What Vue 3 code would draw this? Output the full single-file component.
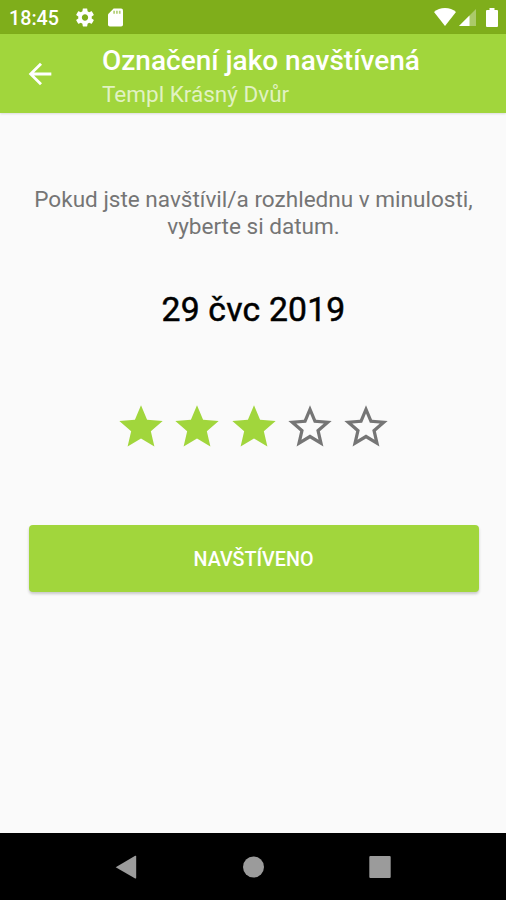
<script setup>
import { ref } from 'vue'

const rating = ref(3)
const starFull = 'M12 17.27L18.18 21l-1.64-7.03L22 9.24l-7.19-.61L12 2 9.19 8.63 2 9.24l5.46 4.73L5.82 21z'
const starEmpty = 'M22 9.24l-7.19-.62L12 2 9.19 8.63 2 9.24l5.46 4.73L5.82 21 12 17.27 18.18 21l-1.63-7.03L22 9.24zM12 15.5l-3.93 2.37 1.04-4.47-3.47-3.01 4.58-.4L12 5.8l1.78 4.2 4.58.4-3.47 3 1.04 4.47L12 15.5z'
</script>

<template>
  <div class="screen">
    <div class="status">
      <span class="clock">18:45</span>
      <svg class="gear" viewBox="2 2 20 20"><path fill="#fff" d="M19.43 12.98c.04-.32.07-.64.07-.98s-.03-.66-.07-.98l2.11-1.65c.19-.15.24-.42.12-.64l-2-3.46c-.12-.22-.39-.3-.61-.22l-2.49 1c-.52-.4-1.08-.73-1.69-.98l-.38-2.65C14.46 2.18 14.25 2 14 2h-4c-.25 0-.46.18-.49.42l-.38 2.65c-.61.25-1.17.59-1.69.98l-2.49-1c-.23-.09-.49 0-.61.22l-2 3.46c-.13.22-.07.49.12.64l2.11 1.65c-.04.32-.07.65-.07.98s.03.66.07.98l-2.11 1.65c-.19.15-.24.42-.12.64l2 3.46c.12.22.39.3.61.22l2.49-1c.52.4 1.08.73 1.69.98l.38 2.65c.03.24.24.42.49.42h4c.25 0 .46-.18.49-.42l.38-2.65c.61-.25 1.17-.59 1.69-.98l2.49 1c.23.09.49 0 .61-.22l2-3.46c.12-.22.07-.49-.12-.64l-2.11-1.65zM12 15.5c-1.93 0-3.5-1.57-3.5-3.5s1.57-3.5 3.5-3.5 3.5 1.57 3.5 3.5-1.57 3.5-3.5 3.5z" /></svg>
      <svg class="card" viewBox="0 0 16 19"><path fill="#fff" d="M6 0h8q2 0 2 2v15q0 2-2 2H2q-2 0-2-2V6z" /><path fill="#7fae1b" opacity=".6" d="M5.6 2.2h1.8v3.4H5.6zM8.6 2.2h1.8v3.4H8.6zM11.6 2.2h1.8v3.4h-1.8z" /></svg>
      <span class="fill"></span>
      <svg class="wifi" viewBox="0 0 22 18"><path fill="#fff" d="M0 4Q4.500 0 11 0t11 4L11 18z" /></svg>
      <svg class="signal" viewBox="0 0 17 17"><path fill="#fff" opacity=".35" d="M17 0v17H0z" /><path fill="#fff" d="M10.500 6.500V17H0z" /></svg>
      <svg class="battery" viewBox="0 0 12 19"><path fill="#fff" d="M3.500 0h5v2H11q1 0 1 1v15q0 1-1 1H1q-1 0-1-1V3q0-1 1-1h2.500z" /></svg>
    </div>

    <header class="bar">
      <svg class="back" viewBox="0 0 24 24"><path fill="#fff" d="M20 11H7.830l5.590-5.590L12 4l-8 8 8 8 1.410-1.410L7.830 13H20v-2z" /></svg>
      <div class="titles">
        <h1>Označení jako navštívená</h1>
        <p>Templ Krásný Dvůr</p>
      </div>
    </header>

    <main class="content">
      <p class="hint">Pokud jste navštívil/a rozhlednu v minulosti,<br>vyberte si datum.</p>
      <div class="date">29 čvc 2019</div>
      <div class="stars">
        <svg v-for="n in 5" :key="n" viewBox="0 0 24 24" :class="{ on: n <= rating }" @click="rating = n">
          <path :d="n <= rating ? starFull : starEmpty" />
        </svg>
      </div>
      <button class="submit">NAVŠTÍVENO</button>
    </main>

    <nav class="nav">
      <svg viewBox="0 0 24 24"><path d="M.700 12.200L20.200 .8q1-.4 1 .7v21.200q0 1.100-1 .7z" /></svg>
      <svg viewBox="0 0 24 24"><circle cx="12.500" cy="12" r="10.500" /></svg>
      <svg viewBox="0 0 24 24"><rect x="1.300" y="1" width="21.400" height="22" rx="1" /></svg>
    </nav>
  </div>
</template>

<style>
body { margin: 0; }
</style>

<style scoped>
.screen { width: 506px; height: 900px; display: flex; flex-direction: column; background: #fafafa; font-family: Roboto, "Liberation Sans", sans-serif; overflow: hidden; }
.status { height: 34px; flex: none; background: #7fae1b; display: flex; align-items: center; padding: 0 8px 0 9px; box-sizing: border-box; }
.clock { color: #fff; font-size: 19.700px; font-weight: 500; width: 66.500px; line-height: 32px; padding-top: 4px; }
.status svg { display: block; flex: none; }
.gear { width: 18px; height: 19px; margin-top: 1px; }
.card { width: 15px; height: 19px; margin: 1px 0 0 14px; }
.fill { flex: 1; }
.wifi { width: 22px; height: 18px; }
.signal { width: 17px; height: 17px; margin: 1px 10px 0 3px; }
.battery { width: 12px; height: 19px; }
.bar { height: 79px; flex: none; background: #a1d63c; display: flex; box-sizing: border-box; padding-left: 23px; box-shadow: 0 1px 2px rgba(0, 0, 0, .12); }
.back { width: 34px; height: 34px; margin: 22.500px 45px 0 0; flex: none; }
.titles { padding-top: 10px; color: #fff; white-space: nowrap; }
h1 { margin: 0; font-size: 28px; line-height: 34px; font-weight: 500; }
.titles p { margin: 0; font-size: 22.500px; line-height: 32px; color: rgba(255, 255, 255, .7); }
.content { flex: 1; display: flex; flex-direction: column; align-items: center; padding: 73px 27.500px 0 28.500px; }
.hint { margin: 0; text-align: center; font-size: 22.550px; line-height: 27px; color: #757575; white-space: nowrap; }
.date { margin-top: 50px; font-size: 33.700px; line-height: 40px; letter-spacing: .2px; -webkit-text-stroke: .5px #000; color: #000; }
.stars { display: flex; gap: 4.250px; margin-top: 70.800px; }
.stars svg { width: 52px; height: 52px; display: block; fill: #757575; }
.stars svg.on { fill: #a1d63c; }
.submit { width: 450px; height: 67px; margin: 72.200px 0 0; padding: 2px 0 0; border: 0; border-radius: 4px; background: #a1d63c; color: #fff; font: 500 19.700px/65px Roboto, "Liberation Sans", sans-serif; box-shadow: 0 2px 3px rgba(0, 0, 0, .2); }
.nav { height: 67px; flex: none; background: #000; display: flex; justify-content: center; align-items: center; gap: 102.500px; }
.nav svg { width: 24px; height: 24px; fill: #9b9b9b; }
</style>
